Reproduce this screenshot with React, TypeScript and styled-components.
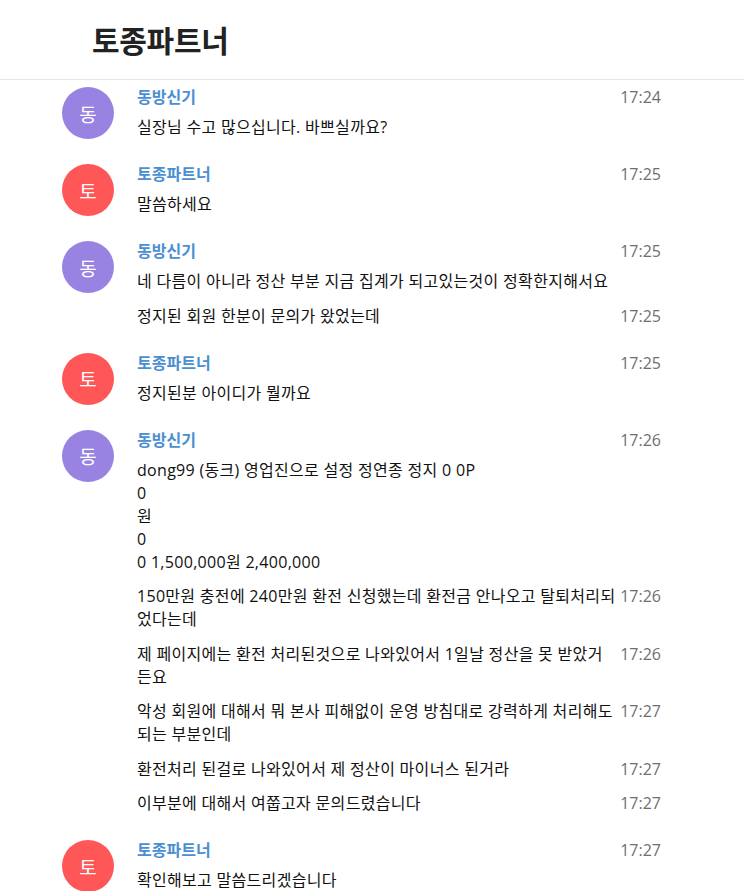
import React from "react";
import styled, { createGlobalStyle } from "styled-components";

const Global = createGlobalStyle`
  html, body { margin: 0; padding: 0; background: #fff; }
  body { font-family: "Open Sans", "Noto Sans CJK KR", sans-serif; color: #111; }
  * { box-sizing: border-box; }
`;

const Page = styled.div`
  width: 744px;
  min-height: 891px;
  overflow: hidden;
`;

const Header = styled.header`
  height: 80px;
  border-bottom: 1px solid #e6e6e6;
  padding: 0 0 2px 92px;
  display: flex;
  align-items: center;
`;

const Title = styled.h1`
  margin: 0;
  font-size: 30px;
  font-weight: 700;
  color: #222;
  font-family: "Noto Sans CJK KR", sans-serif;
  letter-spacing: -0.3px;
`;

const List = styled.main`
  display: flex;
  flex-direction: column;
  gap: 25px;
  padding: 7px 83px 0 62px;
`;

const Group = styled.section`
  display: flex;
  gap: 23px;
`;

const Avatar = styled.div<{ $color: string }>`
  flex: 0 0 52px;
  width: 52px;
  height: 52px;
  border-radius: 50%;
  background: ${(p) => p.$color};
  color: #fff;
  font-size: 19px;
  display: flex;
  align-items: center;
  justify-content: center;
  font-family: "Noto Sans CJK KR", sans-serif;
`;

const Body = styled.div`
  flex: 1;
  min-width: 0;
  display: flex;
  flex-direction: column;
  gap: 11.5px;
`;

const Row = styled.div`
  display: flex;
  align-items: flex-start;
  line-height: 23px;
`;

const NameRow = styled(Row)`
  line-height: 20px;
  margin-bottom: -2.5px;
`;

const Name = styled.div`
  flex: 1;
  font-size: 16px;
  font-weight: 700;
  color: #4a8fd2;
`;

const Text = styled.div`
  flex: 1;
  font-size: 16px;
  letter-spacing: 0.3px;
  color: #111;
`;

const Time = styled.div`
  flex: 0 0 44px;
  text-align: right;
  font-size: 16px;
  color: #6f6f6f;
`;

type Msg = { text: string[]; time?: string };
type G = { name: string; initial: string; color: string; time: string; msgs: Msg[] };

const PURPLE = "#9883e3";
const RED = "#ff5657";

const groups: G[] = [
  { name: "동방신기", initial: "동", color: PURPLE, time: "17:24", msgs: [{ text: ["실장님 수고 많으십니다. 바쁘실까요?"] }] },
  { name: "토종파트너", initial: "토", color: RED, time: "17:25", msgs: [{ text: ["말씀하세요"] }] },
  {
    name: "동방신기", initial: "동", color: PURPLE, time: "17:25",
    msgs: [
      { text: ["네 다름이 아니라 정산 부분 지금 집계가 되고있는것이 정확한지해서요"] },
      { text: ["정지된 회원 한분이 문의가 왔었는데"], time: "17:25" },
    ],
  },
  { name: "토종파트너", initial: "토", color: RED, time: "17:25", msgs: [{ text: ["정지된분 아이디가 뭘까요"] }] },
  {
    name: "동방신기", initial: "동", color: PURPLE, time: "17:26",
    msgs: [
      { text: ["dong99 (동크) 영업진으로 설정 정연종 정지 0 0P", "0", "원", "0", "0 1,500,000원 2,400,000"] },
      { text: ["150만원 충전에 240만원 환전 신청했는데 환전금 안나오고 탈퇴처리되었다는데"], time: "17:26" },
      { text: ["제 페이지에는 환전 처리된것으로 나와있어서 1일날 정산을 못 받았거든요"], time: "17:26" },
      { text: ["악성 회원에 대해서 뭐 본사 피해없이 운영 방침대로 강력하게 처리해도되는 부분인데"], time: "17:27" },
      { text: ["환전처리 된걸로 나와있어서 제 정산이 마이너스 된거라"], time: "17:27" },
      { text: ["이부분에 대해서 여쭙고자 문의드렸습니다"], time: "17:27" },
    ],
  },
  { name: "토종파트너", initial: "토", color: RED, time: "17:27", msgs: [{ text: ["확인해보고 말씀드리겠습니다"] }] },
];

export default function App() {
  return (
    <Page>
      <Global />
      <Header>
        <Title>토종파트너</Title>
      </Header>
      <List>
        {groups.map((g, i) => (
          <Group key={i}>
            <Avatar $color={g.color}>{g.initial}</Avatar>
            <Body>
              <NameRow>
                <Name>{g.name}</Name>
                <Time>{g.time}</Time>
              </NameRow>
              {g.msgs.map((m, j) => (
                <Row key={j}>
                  <Text>
                    {m.text.map((t, k) => (
                      <div key={k}>{t}</div>
                    ))}
                  </Text>
                  {m.time && <Time>{m.time}</Time>}
                </Row>
              ))}
            </Body>
          </Group>
        ))}
      </List>
    </Page>
  );
}
